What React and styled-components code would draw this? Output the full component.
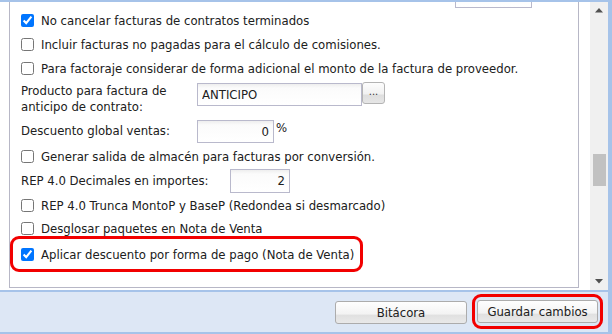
import React from "react";
import styled, { createGlobalStyle } from "styled-components";

const GlobalStyle = createGlobalStyle`
  html, body {
    margin: 0;
    padding: 0;
    background: #fff;
  }
  body {
    font-family: "DejaVu Sans Condensed", "DejaVu Sans", sans-serif;
    font-size: 13px;
    color: #202020;
  }
`;

const Window = styled.div`
  width: 612px;
  height: 334px;
  box-sizing: border-box;
  border-top: 2px solid #a6c3e9;
  border-right: 4px solid #a6c3e9;
  display: flex;
  flex-direction: column;
  overflow: hidden;
`;

const ScrollArea = styled.div`
  display: flex;
  height: 288px;
  background: #fff;
`;

const Content = styled.div`
  flex: 1;
  padding: 0 11px 0 9px;
  overflow: hidden;
`;

const Box = styled.div`
  height: 286px;
  box-sizing: border-box;
  border: 1px solid #b7b7c6;
  border-top: none;
  display: flex;
  flex-direction: column;
`;

const ClipRow = styled.div`
  height: 6px;
  overflow: hidden;
  display: flex;
  align-items: flex-end;
  padding-left: 445px;
`;

const CheckRow = styled.label`
  height: ${p => p.$h || 24}px;
  display: flex;
  align-items: center;
  padding-left: 11px;
  white-space: nowrap;
`;

const Check = styled.input.attrs({ type: "checkbox" })`
  width: 13px;
  height: 13px;
  margin: 0 7px 0 0;
  flex: none;
`;

const FieldRow = styled.div`
  height: ${p => p.$h}px;
  display: flex;
  align-items: ${p => (p.$top ? "flex-start" : "center")};
  padding-top: ${p => (p.$top ? 3 : 0)}px;
  padding-left: 11px;
  box-sizing: border-box;
`;

const Label = styled.div`
  width: ${p => p.$w}px;
  line-height: 16px;
  flex: none;
`;

const TextInput = styled.input`
  width: ${p => p.$w}px;
  height: ${p => p.$h || 23}px;
  box-sizing: border-box;
  border: 1px solid #b9b9cc;
  background: linear-gradient(#eeeeee 0, #fbfbfb 4px, #fff 100%);
  font: inherit;
  color: #202020;
  padding: 0 4px;
  text-align: ${p => (p.$right ? "right" : "left")};
  outline: none;
  flex: none;
`;

const DotsButton = styled.button`
  width: 23px;
  height: 22px;
  margin-top: -1px;
  box-sizing: border-box;
  border: 1px solid #b4b4b4;
  border-radius: 3px;
  background: linear-gradient(#fdfdfd 0%, #f1f1f1 55%, #dedede 60%, #e6e6e6 100%);
  font: inherit;
  font-size: 11px;
  line-height: 1;
  padding: 0 0 4px;
  color: #333;
`;

const Percent = styled.span`
  align-self: flex-start;
  margin: 2px 0 0 2px;
`;

const RedHighlight = styled.div`
  align-self: flex-start;
  margin: -3px 0 0 0;
  height: 36px;
  box-sizing: border-box;
  border: 3px solid #f20000;
  border-radius: 9px;
  padding: 0 6px 0 8px;
  display: flex;
  align-items: center;
  white-space: nowrap;
`;

const Scrollbar = styled.div`
  width: 18px;
  background: #f0f0f0;
  display: flex;
  flex-direction: column;
  align-items: center;
`;

const Arrow = styled.div`
  height: 17px;
  width: 18px;
  display: flex;
  align-items: center;
  justify-content: center;
`;

const Track = styled.div`
  flex: 1;
  width: 18px;
  display: flex;
  flex-direction: column;
  align-items: center;
`;

const Thumb = styled.div`
  width: 13px;
  height: 32px;
  background: #c1c1c1;
`;

const Footer = styled.div`
  height: 44px;
  box-sizing: border-box;
  background: #dde7f5;
  border-top: 2px solid #a6c3e9;
  border-bottom: 2px solid #a6c3e9;
  display: flex;
  align-items: center;
  justify-content: flex-end;
  gap: 5px;
  padding-right: 5px;
`;

const Button = styled.button`
  width: ${p => p.$w}px;
  height: 23px;
  box-sizing: border-box;
  border: 1px solid #acacac;
  border-radius: 3px;
  background: linear-gradient(#fefefe 0%, #f3f3f3 58%, #e0e0e0 62%, #e9e9e9 100%);
  font: inherit;
  color: #202020;
  padding: 0;
`;

const ButtonHighlight = styled.div`
  border: 3px solid #f20000;
  border-radius: 9px;
  padding: 3px 2px;
  margin-top: -1px;
`;

const Triangle = ({ down }) => (
  <svg width="8" height="5" viewBox="0 0 8 5">
    <path d={down ? "M0 0H8L4 4.5Z" : "M0 4.5H8L4 0Z"} fill="#505050" />
  </svg>
);

export default function App() {
  const thumbTop = 135;
  return (
    <>
      <GlobalStyle />
      <Window>
        <ScrollArea>
          <Content>
            <Box>
              <ClipRow>
                <TextInput $w={77} $h={24} readOnly />
              </ClipRow>
              <CheckRow>
                <Check defaultChecked />
                No cancelar facturas de contratos terminados
              </CheckRow>
              <CheckRow>
                <Check />
                Incluir facturas no pagadas para el cálculo de comisiones.
              </CheckRow>
              <CheckRow>
                <Check />
                Para factoraje considerar de forma adicional el monto de la factura de proveedor.
              </CheckRow>
              <FieldRow $h={38} $top>
                <Label $w={176}>
                  Producto para factura de
                  <br />
                  anticipo de contrato:
                </Label>
                <TextInput $w={165} defaultValue="ANTICIPO" />
                <DotsButton>...</DotsButton>
              </FieldRow>
              <FieldRow $h={26}>
                <Label $w={176}>Descuento global ventas:</Label>
                <TextInput $w={77} $right defaultValue="0" />
                <Percent>%</Percent>
              </FieldRow>
              <CheckRow>
                <Check />
                Generar salida de almacén para facturas por conversión.
              </CheckRow>
              <FieldRow $h={25}>
                <Label $w={209}>REP 4.0 Decimales en importes:</Label>
                <TextInput $w={60} $h={24} $right defaultValue="2" />
              </FieldRow>
              <CheckRow>
                <Check />
                REP 4.0 Trunca MontoP y BaseP (Redondea si desmarcado)
              </CheckRow>
              <CheckRow $h={22}>
                <Check />
                Desglosar paquetes en Nota de Venta
              </CheckRow>
              <RedHighlight>
                <Check defaultChecked />
                Aplicar descuento por forma de pago (Nota de Venta)
              </RedHighlight>
            </Box>
          </Content>
          <Scrollbar>
            <Arrow>
              <Triangle />
            </Arrow>
            <Track>
              <Thumb style={{ marginTop: thumbTop }} />
            </Track>
            <Arrow>
              <Triangle down />
            </Arrow>
          </Scrollbar>
        </ScrollArea>
        <Footer>
          <Button $w={132}>Bitácora</Button>
          <ButtonHighlight>
            <Button $w={121}>Guardar cambios</Button>
          </ButtonHighlight>
        </Footer>
      </Window>
    </>
  );
}
